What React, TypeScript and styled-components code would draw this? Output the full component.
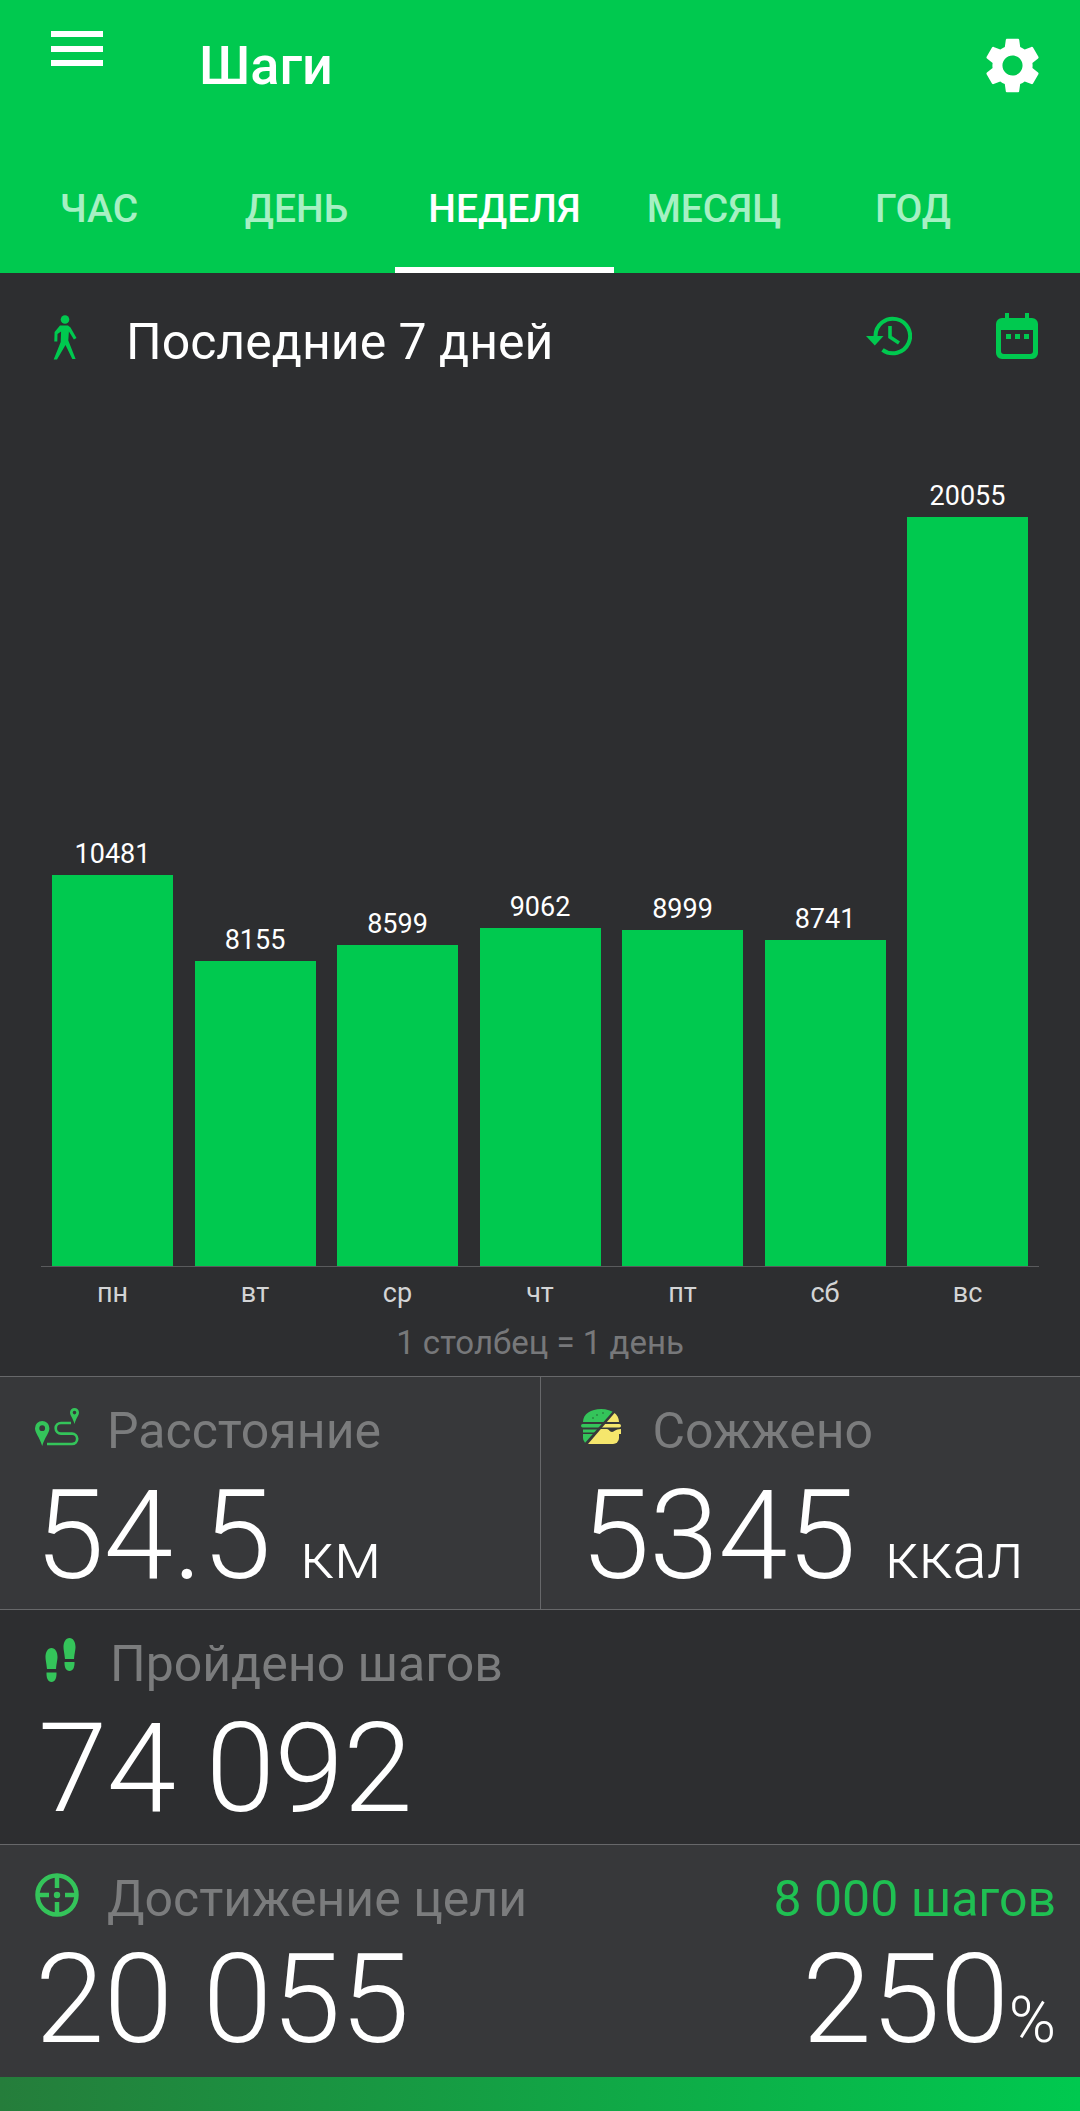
import React from "react";
import styled, { createGlobalStyle } from "styled-components";

const Global = createGlobalStyle`
  html, body { margin: 0; padding: 0; background: #2d2e30; }
  body { font-family: Roboto, "Liberation Sans", sans-serif; }
`;

const Page = styled.div`
  width: 1080px;
  height: 2111px;
  display: flex;
  flex-direction: column;
  overflow: hidden;
  background: #2d2e30;
`;
const Header = styled.header`
  height: 273px;
  background: #00c94f;
  display: flex;
  flex-direction: column;
`;
const TopBar = styled.div`
  height: 130px;
  display: flex;
  align-items: center;
  padding: 0 34px 0 51px;
`;
const Burger = styled.div`
  width: 52px;
  height: 35px;
  margin-top: -33px;
  display: flex;
  flex-direction: column;
  justify-content: space-between;
  span { display: block; height: 6px; background: #fff; }
`;
const Title = styled.h1`
  margin: 1px 0 0 96px;
  flex: 1;
  font-size: 54px;
  font-weight: 500;
  color: #fff;
`;
const Tabs = styled.nav`
  margin-top: 33px;
  height: 110px;
  display: grid;
  grid-template-columns: 198px 197px 219px 200px 198px;
`;
const Tab = styled.div<{ $active?: boolean }>`
  display: flex;
  align-items: center;
  justify-content: center;
  padding-bottom: 12px;
  box-sizing: border-box;
  font-size: 39px;
  font-weight: 500;
  color: ${(p) => (p.$active ? "#fff" : "#a6f0c3")};
  border-bottom: 6px solid ${(p) => (p.$active ? "#fff" : "transparent")};
`;
const RangeRow = styled.div`
  height: 126px;
  display: flex;
  align-items: center;
  padding: 0 42px 0 52px;
`;
const RangeTitle = styled.div`
  flex: 1;
  margin: 12px 0 0 48px;
  font-size: 50px;
  color: #fff;
`;
const RangeAction = styled.div`
  margin-left: 84px;
  display: flex;
`;
const Chart = styled.section`
  height: 977px;
  flex: none;
  padding: 0 41px;
  display: flex;
  flex-direction: column;
`;
const Plot = styled.div`
  height: 867px;
  flex: none;
  display: flex;
  align-items: flex-end;
  justify-content: space-between;
  padding: 0 11px;
  border-bottom: 1px solid #5a5b5d;
`;
const BarCol = styled.div`
  width: 121px;
  display: flex;
  flex-direction: column;
  align-items: center;
`;
const BarValue = styled.span`
  font-size: 27px;
  line-height: 32px;
  margin-bottom: 5px;
  color: #fff;
`;
const Bar = styled.div`
  width: 121px;
  background: #00c94f;
`;
const Axis = styled.div`
  display: flex;
  justify-content: space-between;
  padding: 9px 11px 0;
`;
const AxisLabel = styled.span`
  width: 121px;
  text-align: center;
  font-size: 27px;
  line-height: 34px;
  color: #d3d4d5;
`;
const Note = styled.div`
  margin-top: 15px;
  text-align: center;
  font-size: 33px;
  line-height: 36px;
  color: #77787a;
`;
const Row = styled.section<{ $tone: "light" | "dark"; $height: number }>`
  height: ${(p) => p.$height}px;
  flex: none;
  display: flex;
  box-sizing: border-box;
  border-top: 1px solid #67686a;
  background: ${(p) => (p.$tone === "light" ? "#37383a" : "#2d2e30")};
`;
const Cell = styled.div<{ $divider?: boolean }>`
  flex: 1;
  box-sizing: border-box;
  ${(p) => p.$divider && "border-right: 1px solid #67686a;"}
  display: flex;
  flex-direction: column;
  padding: 25px 24px 0 0;
`;
const LabelRow = styled.div<{ $iconLeft: number; $gap: number }>`
  height: 64px;
  display: flex;
  align-items: center;
  padding-left: ${(p) => p.$iconLeft}px;
  gap: ${(p) => p.$gap}px;
  svg { flex: none; margin-top: -9px; }
`;
const Label = styled.span`
  flex: 1;
  font-size: 50px;
  color: #7b7c7d;
`;
const Target = styled.span`
  font-size: 50px;
  color: #1fc052;
`;
const ValueRow = styled.div<{ $left: number; $top: number }>`
  display: flex;
  justify-content: space-between;
  align-items: baseline;
  padding-left: ${(p) => p.$left}px;
  margin-top: ${(p) => p.$top}px;
  font-weight: 300;
  color: #fff;
  line-height: 124px;
`;
const Big = styled.span`
  font-size: 125px;
  letter-spacing: -0.5px;
`;
const Unit = styled.span`
  font-size: 65px;
  margin-left: 29px;
`;
const Percent = styled.span`
  font-size: 64px;
`;
const Footer = styled.div`
  flex: 1;
  background: linear-gradient(90deg, #257d3b 0%, #00c94f 100%);
`;
const WalkerBox = styled.div`
  display: flex;
  margin-top: 3px;
`;

const G = "#00c94f";
const L = "#34c45a";

const Gear = () => (
  <svg width="67" height="67" viewBox="0 0 24 24" fill="#fff">
    <path d="M19.14 12.94c.04-.3.06-.61.06-.94 0-.32-.02-.64-.07-.94l2.03-1.58c.18-.14.23-.41.12-.61l-1.92-3.32c-.12-.22-.37-.29-.59-.22l-2.39.96c-.5-.38-1.03-.7-1.62-.94l-.36-2.54c-.04-.24-.24-.41-.48-.41h-3.84c-.24 0-.43.17-.47.41l-.36 2.54c-.59.24-1.13.57-1.62.94l-2.39-.96c-.22-.08-.47 0-.59.22L2.74 8.87c-.12.21-.08.47.12.61l2.03 1.58c-.05.3-.09.63-.09.94s.02.64.07.94l-2.03 1.58c-.18.14-.23.41-.12.61l1.92 3.32c.12.22.37.29.59.22l2.39-.96c.5.38 1.03.7 1.62.94l.36 2.54c.05.24.24.41.48.41h3.84c.24 0 .44-.17.47-.41l.36-2.54c.59-.24 1.13-.56 1.62-.94l2.39.96c.22.08.47 0 .59-.22l1.92-3.32c.12-.22.07-.47-.12-.61l-2.01-1.58zM12 15.6c-1.98 0-3.6-1.62-3.6-3.6s1.62-3.6 3.6-3.6 3.6 1.62 3.6 3.6-1.62 3.6-3.6 3.6z" />
  </svg>
);
const Walker = () => (
  <svg width="26" height="46" viewBox="0 0 26 46" fill={G}>
    <circle cx="13" cy="4.5" r="4.3" />
    <path d="M8 10.5h8l2.500 2 6 10.500-2.600 1.600-5-8-.6 9 7.300 18.400h-3.300L13.500 30 5 44.500H1.700l7-17.500.4-10.600-3.600 2.600-.2 7.500H2.300l.3-9.500z" />
  </svg>
);
const History = () => (
  <svg width="46" height="40" viewBox="0 0 46 40" fill="none">
    <path d="M9.500 20a17.300 17.300 0 1 1 7 13.900" stroke={G} strokeWidth="4" />
    <path d="M0 20h17.500l-8.700 9.500z" fill={G} />
    <path d="M24 10v11l9 6" stroke={G} strokeWidth="3.600" />
  </svg>
);
const CalendarIcon = () => (
  <svg width="42" height="46" viewBox="0 0 42 46">
    <path d="M9 0h4v5h16V0h4v5h3a6 6 0 0 1 6 6v29a6 6 0 0 1-6 6H6a6 6 0 0 1-6-6V11a6 6 0 0 1 6-6h3zM5 17v21a3 3 0 0 0 3 3h26a3 3 0 0 0 3-3V17z" fill={G} />
    <path d="M10 21h5v5h-5zM19 21h5v5h-5zM28 21h5v5h-5z" fill={G} />
  </svg>
);
const RouteIcon = () => (
  <svg width="44" height="38" viewBox="0 0 44 38" fill="none">
    <path fillRule="evenodd" d="M7.200 13a7.200 7.200 0 0 1 7.200 7.200c0 4.800-4.400 8.300-7.200 17.800C4.400 28.500 0 25 0 20.200A7.200 7.200 0 0 1 7.200 13zm0 4.300a2.900 2.900 0 1 0 0 5.800 2.900 2.900 0 0 0 0-5.800z" fill={L} />
    <path fillRule="evenodd" d="M39.500 0a4.500 4.500 0 0 1 4.500 4.500c0 3-2.800 5-4.500 11.500C37.800 9.500 35 7.500 35 4.500A4.500 4.500 0 0 1 39.500 0zm0 2.800a1.800 1.800 0 1 0 0 3.600 1.800 1.800 0 0 0 0-3.600z" fill={L} />
    <path d="M36 15H26a5.300 5.300 0 0 0 0 10.600h11a5 5 0 0 1 0 10.400H12" stroke={L} strokeWidth="2.700" />
  </svg>
);
const BurgerIcon = () => (
  <svg width="40" height="35" viewBox="0 0 40 35">
    <defs>
      <clipPath id="bun-green">
        <polygon points="0,0 34,0 3,35 0,35" />
      </clipPath>
      <clipPath id="bun-yellow">
        <polygon points="37,0 40,0 40,35 7,35" />
      </clipPath>
    </defs>
    <g clipPath="url(#bun-green)" fill={L}>
      <path d="M2 13C2 5 10 0 20 0s18 5 18 13z" />
      <rect x="0" y="15" width="40" height="3.500" rx="1.700" />
      <path d="M2 20.500h36v3H2z" />
      <path d="M2 25h36v4a6 6 0 0 1-6 6H8a6 6 0 0 1-6-6z" />
    </g>
    <g clipPath="url(#bun-yellow)" fill="#f5e66c">
      <path d="M2 13C2 5 10 0 20 0s18 5 18 13z" />
      <rect x="0" y="15" width="40" height="3.500" rx="1.700" />
      <path d="M14 20h12c2 0 2.500 3 5 3s3-3 9-3v5H14z" />
      <path d="M2 25h36v4a6 6 0 0 1-6 6H8a6 6 0 0 1-6-6z" />
    </g>
    <g fill="#2a8a45">
      <circle cx="16" cy="6" r="1" />
      <circle cx="22" cy="4" r="1" />
      <circle cx="12" cy="9" r="1" />
    </g>
  </svg>
);
const FeetIcon = () => (
  <svg width="31" height="44" viewBox="0 0 31 44" fill={L}>
    <path d="M6.500 10c3.800 0 6 4 6 9 0 3-.8 5-1.500 12H2c-.7-7-1.500-9-1.500-12 0-5 2.200-9 6-9z" />
    <path d="M1.500 34.500h10c.3 5.500-1.500 9.500-5 9.500s-5.300-4-5-9.500z" />
    <path d="M24.500 0c3.800 0 6 4 6 9 0 3-.8 5-1.500 12h-9c-.7-7-1.500-9-1.500-12 0-5 2.200-9 6-9z" />
    <path d="M19.500 24h10c.3 5-1.500 9-5 9s-5.300-4-5-9z" />
  </svg>
);
const TargetIcon = () => (
  <svg width="44" height="44" viewBox="0 0 44 44" fill="none" stroke={L} strokeWidth="4.500">
    <circle cx="22" cy="22" r="19.500" />
    <path d="M22 3v12M22 29v12M3 22h11M30 22h11" />
    <circle cx="22" cy="22" r="3.200" fill={L} stroke="none" />
  </svg>
);

const week: [string, number][] = [
  ["пн", 10481],
  ["вт", 8155],
  ["ср", 8599],
  ["чт", 9062],
  ["пт", 8999],
  ["сб", 8741],
  ["вс", 20055],
];
const tabs = ["ЧАС", "ДЕНЬ", "НЕДЕЛЯ", "МЕСЯЦ", "ГОД"];
const PX_PER_STEP = 749 / 20055;

export default function App() {
  return (
    <Page>
      <Global />
      <Header>
        <TopBar>
          <Burger>
            <span />
            <span />
            <span />
          </Burger>
          <Title>Шаги</Title>
          <Gear />
        </TopBar>
        <Tabs>
          {tabs.map((t) => (
            <Tab key={t} $active={t === "НЕДЕЛЯ"}>
              {t}
            </Tab>
          ))}
        </Tabs>
      </Header>
      <RangeRow>
        <WalkerBox>
          <Walker />
        </WalkerBox>
        <RangeTitle>Последние 7 дней</RangeTitle>
        <RangeAction>
          <History />
        </RangeAction>
        <RangeAction>
          <CalendarIcon />
        </RangeAction>
      </RangeRow>
      <Chart>
        <Plot>
          {week.map(([d, v]) => (
            <BarCol key={d}>
              <BarValue>{v}</BarValue>
              <Bar style={{ height: v * PX_PER_STEP }} />
            </BarCol>
          ))}
        </Plot>
        <Axis>
          {week.map(([d]) => (
            <AxisLabel key={d}>{d}</AxisLabel>
          ))}
        </Axis>
        <Note>1 столбец = 1 день</Note>
      </Chart>
      <Row $tone="light" $height={233}>
        <Cell $divider>
          <LabelRow $iconLeft={35} $gap={28}>
            <RouteIcon />
            <Label>Расстояние</Label>
          </LabelRow>
          <ValueRow $left={35} $top={14}>
            <span>
              <Big>54.5</Big>
              <Unit>км</Unit>
            </span>
          </ValueRow>
        </Cell>
        <Cell>
          <LabelRow $iconLeft={40} $gap={32}>
            <BurgerIcon />
            <Label>Сожжено</Label>
          </LabelRow>
          <ValueRow $left={40} $top={14}>
            <span>
              <Big>5345</Big>
              <Unit>ккал</Unit>
            </span>
          </ValueRow>
        </Cell>
      </Row>
      <Row $tone="dark" $height={235}>
        <Cell>
          <LabelRow $iconLeft={45} $gap={34}>
            <FeetIcon />
            <Label>Пройдено шагов</Label>
          </LabelRow>
          <ValueRow $left={38} $top={14}>
            <span>
              <Big>74 092</Big>
            </span>
          </ValueRow>
        </Cell>
      </Row>
      <Row $tone="light" $height={233}>
        <Cell>
          <LabelRow $iconLeft={35} $gap={28}>
            <TargetIcon />
            <Label>Достижение цели</Label>
            <Target>8 000 шагов</Target>
          </LabelRow>
          <ValueRow $left={35} $top={10}>
            <span>
              <Big>20 055</Big>
            </span>
            <span>
              <Big>250</Big>
              <Percent>%</Percent>
            </span>
          </ValueRow>
        </Cell>
      </Row>
      <Footer />
    </Page>
  );
}
